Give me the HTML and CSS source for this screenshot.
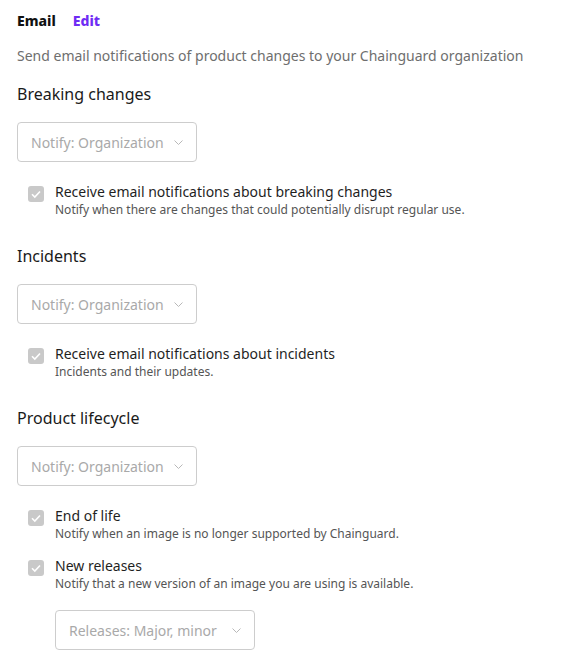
FILE: index.html
```html
<!DOCTYPE html>
<html>
<head>
<meta charset="utf-8">
<link rel="stylesheet" href="styles.css">
</head>
<body>
<div class="page">
  <div class="header">
    <span class="title">Email</span>
    <a class="edit">Edit</a>
  </div>
  <p class="desc">Send email notifications of product changes to your Chainguard organization</p>

  <section class="section">
    <h2 class="heading">Breaking changes</h2>
    <div class="select"><span>Notify: Organization</span><svg class="chev" width="9" height="5" viewBox="0 0 9 5"><path d="M0.5 0.5 L4.5 4.5 L8.5 0.5" fill="none" stroke="#b8b8b8" stroke-width="1"/></svg></div>
    <div class="options">
      <div class="option">
        <span class="check"><svg width="16" height="16" viewBox="0 0 16 16"><path d="M4 8.2 L6.8 11 L12 5.5" fill="none" stroke="#fff" stroke-width="1.6"/></svg></span>
        <div class="text">
          <div class="label">Receive email notifications about breaking changes</div>
          <div class="sub">Notify when there are changes that could potentially disrupt regular use.</div>
        </div>
      </div>
    </div>
  </section>

  <section class="section">
    <h2 class="heading">Incidents</h2>
    <div class="select"><span>Notify: Organization</span><svg class="chev" width="9" height="5" viewBox="0 0 9 5"><path d="M0.5 0.5 L4.5 4.5 L8.5 0.5" fill="none" stroke="#b8b8b8" stroke-width="1"/></svg></div>
    <div class="options">
      <div class="option">
        <span class="check"><svg width="16" height="16" viewBox="0 0 16 16"><path d="M4 8.2 L6.8 11 L12 5.5" fill="none" stroke="#fff" stroke-width="1.6"/></svg></span>
        <div class="text">
          <div class="label">Receive email notifications about incidents</div>
          <div class="sub">Incidents and their updates.</div>
        </div>
      </div>
    </div>
  </section>

  <section class="section">
    <h2 class="heading">Product lifecycle</h2>
    <div class="select"><span>Notify: Organization</span><svg class="chev" width="9" height="5" viewBox="0 0 9 5"><path d="M0.5 0.5 L4.5 4.5 L8.5 0.5" fill="none" stroke="#b8b8b8" stroke-width="1"/></svg></div>
    <div class="options">
      <div class="option">
        <span class="check"><svg width="16" height="16" viewBox="0 0 16 16"><path d="M4 8.2 L6.8 11 L12 5.5" fill="none" stroke="#fff" stroke-width="1.6"/></svg></span>
        <div class="text">
          <div class="label">End of life</div>
          <div class="sub">Notify when an image is no longer supported by Chainguard.</div>
        </div>
      </div>
      <div class="option">
        <span class="check"><svg width="16" height="16" viewBox="0 0 16 16"><path d="M4 8.2 L6.8 11 L12 5.5" fill="none" stroke="#fff" stroke-width="1.6"/></svg></span>
        <div class="text">
          <div class="label">New releases</div>
          <div class="sub">Notify that a new version of an image you are using is available.</div>
          <div class="select select-wide"><span>Releases: Major, minor</span><svg class="chev" width="9" height="5" viewBox="0 0 9 5"><path d="M0.5 0.5 L4.5 4.5 L8.5 0.5" fill="none" stroke="#b8b8b8" stroke-width="1"/></svg></div>
        </div>
      </div>
    </div>
  </section>
</div>
</body>
</html>
```

FILE: styles.css
```css
* { box-sizing: border-box; }
body {
  margin: 0;
  background: #fff;
  font-family: "Noto Sans", "Open Sans", sans-serif;
  color: #1a1a1a;
}
.page {
  padding: 11px 17px 0 17px;
}
.header {
  display: flex;
  gap: 17px;
  font-size: 14px;
  line-height: 20px;
  font-weight: 800;
}
.title { color: #111; }
.edit { color: #6f2cf4; cursor: pointer; }
.desc {
  margin: 15px 0 0 0;
  font-size: 14px;
  line-height: 20px;
  color: #6e6e6e;
}
.section {
  margin-top: 16px;
}
.section + .section { margin-top: 26px; }
.heading {
  margin: 0;
  font-size: 16px;
  font-weight: 400;
  line-height: 24px;
  color: #1a1a1a;
}
.select {
  margin-top: 16px;
  width: 180px;
  height: 40px;
  border: 1px solid #cdcdcd;
  border-radius: 4px;
  display: flex;
  align-items: center;
  justify-content: space-between;
  padding: 0 13px 0 13px;
  font-size: 14px;
  color: #a9a9a9;
}
.select-wide {
  width: 200px;
  margin-top: 18px;
}
.chev { flex: none; }
.options {
  margin-top: 20px;
  padding-left: 11px;
  display: flex;
  flex-direction: column;
  gap: 14px;
}
.option {
  display: flex;
  gap: 11px;
  align-items: flex-start;
}
.check {
  flex: none;
  width: 16px;
  height: 16px;
  margin-top: 4px;
  border-radius: 3px;
  background: #c9c9c9;
  display: flex;
}
.label {
  font-size: 14px;
  line-height: 20px;
  color: #1f1f1f;
}
.sub {
  font-size: 12px;
  line-height: 16px;
  color: #555;
}
```
